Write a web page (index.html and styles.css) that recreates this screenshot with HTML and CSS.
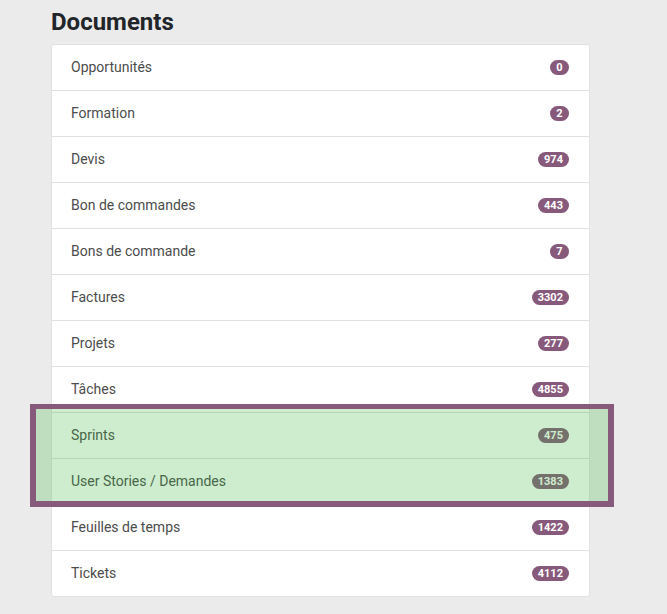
FILE: index.html
```html
<!DOCTYPE html>
<html lang="fr">
<head>
<meta charset="utf-8">
<link rel="stylesheet" href="styles.css">
</head>
<body>
<div class="page">
  <h2 class="title">Documents</h2>
  <div class="card">
    <ul class="list">
      <li class="row"><span class="label">Opportunités</span><span class="badge">0</span></li>
      <li class="row"><span class="label">Formation</span><span class="badge">2</span></li>
      <li class="row"><span class="label">Devis</span><span class="badge">974</span></li>
      <li class="row"><span class="label">Bon de commandes</span><span class="badge">443</span></li>
      <li class="row"><span class="label">Bons de commande</span><span class="badge">7</span></li>
      <li class="row"><span class="label">Factures</span><span class="badge">3302</span></li>
      <li class="row"><span class="label">Projets</span><span class="badge">277</span></li>
      <li class="row"><span class="label">Tâches</span><span class="badge">4855</span></li>
      <li class="row"><span class="label">Sprints</span><span class="badge">475</span></li>
      <li class="row"><span class="label">User Stories / Demandes</span><span class="badge">1383</span></li>
      <li class="row"><span class="label">Feuilles de temps</span><span class="badge">1422</span></li>
      <li class="row"><span class="label">Tickets</span><span class="badge">4112</span></li>
    </ul>
    <div class="highlight"></div>
  </div>
</div>
</body>
</html>
```
FILE: styles.css
```css
html, body {
  margin: 0;
  padding: 0;
  background: #ebebeb;
  font-family: Roboto, "Liberation Sans", sans-serif;
}
.page {
  padding: 0 77px 0 51px;
}
.title {
  margin: 0;
  padding-top: 7px;
  height: 44px;
  box-sizing: border-box;
  font-size: 24px;
  font-weight: 700;
  color: #212529;
  line-height: 30px;
}
.card {
  position: relative;
  width: 539px;
  background: #fff;
  border: 1px solid #e2e2e2;
  border-radius: 3px;
  box-sizing: border-box;
}
.list {
  list-style: none;
  margin: 0;
  padding: 0;
}
.row {
  display: flex;
  align-items: center;
  justify-content: space-between;
  height: 46px;
  box-sizing: border-box;
  padding: 0 20px 2px 19px;
  border-bottom: 1px solid #e0e0e0;
  font-size: 14px;
  color: #4c4c4c;
}
.row:last-child {
  border-bottom: none;
  height: 45px;
}
.badge {
  background: #875a7b;
  color: #fff;
  font-size: 11px;
  font-weight: 700;
  line-height: 15px;
  height: 15px;
  margin-top: 2px;
  padding: 0 6px;
  border-radius: 8px;
  min-width: 7px;
  text-align: center;
}
.highlight {
  position: absolute;
  left: -22px;
  top: 359px;
  width: 584px;
  height: 103px;
  box-sizing: border-box;
  border: 6px solid #875a7b;
  border-top-width: 5px;
  background: rgba(60, 180, 60, 0.25);
}
```
